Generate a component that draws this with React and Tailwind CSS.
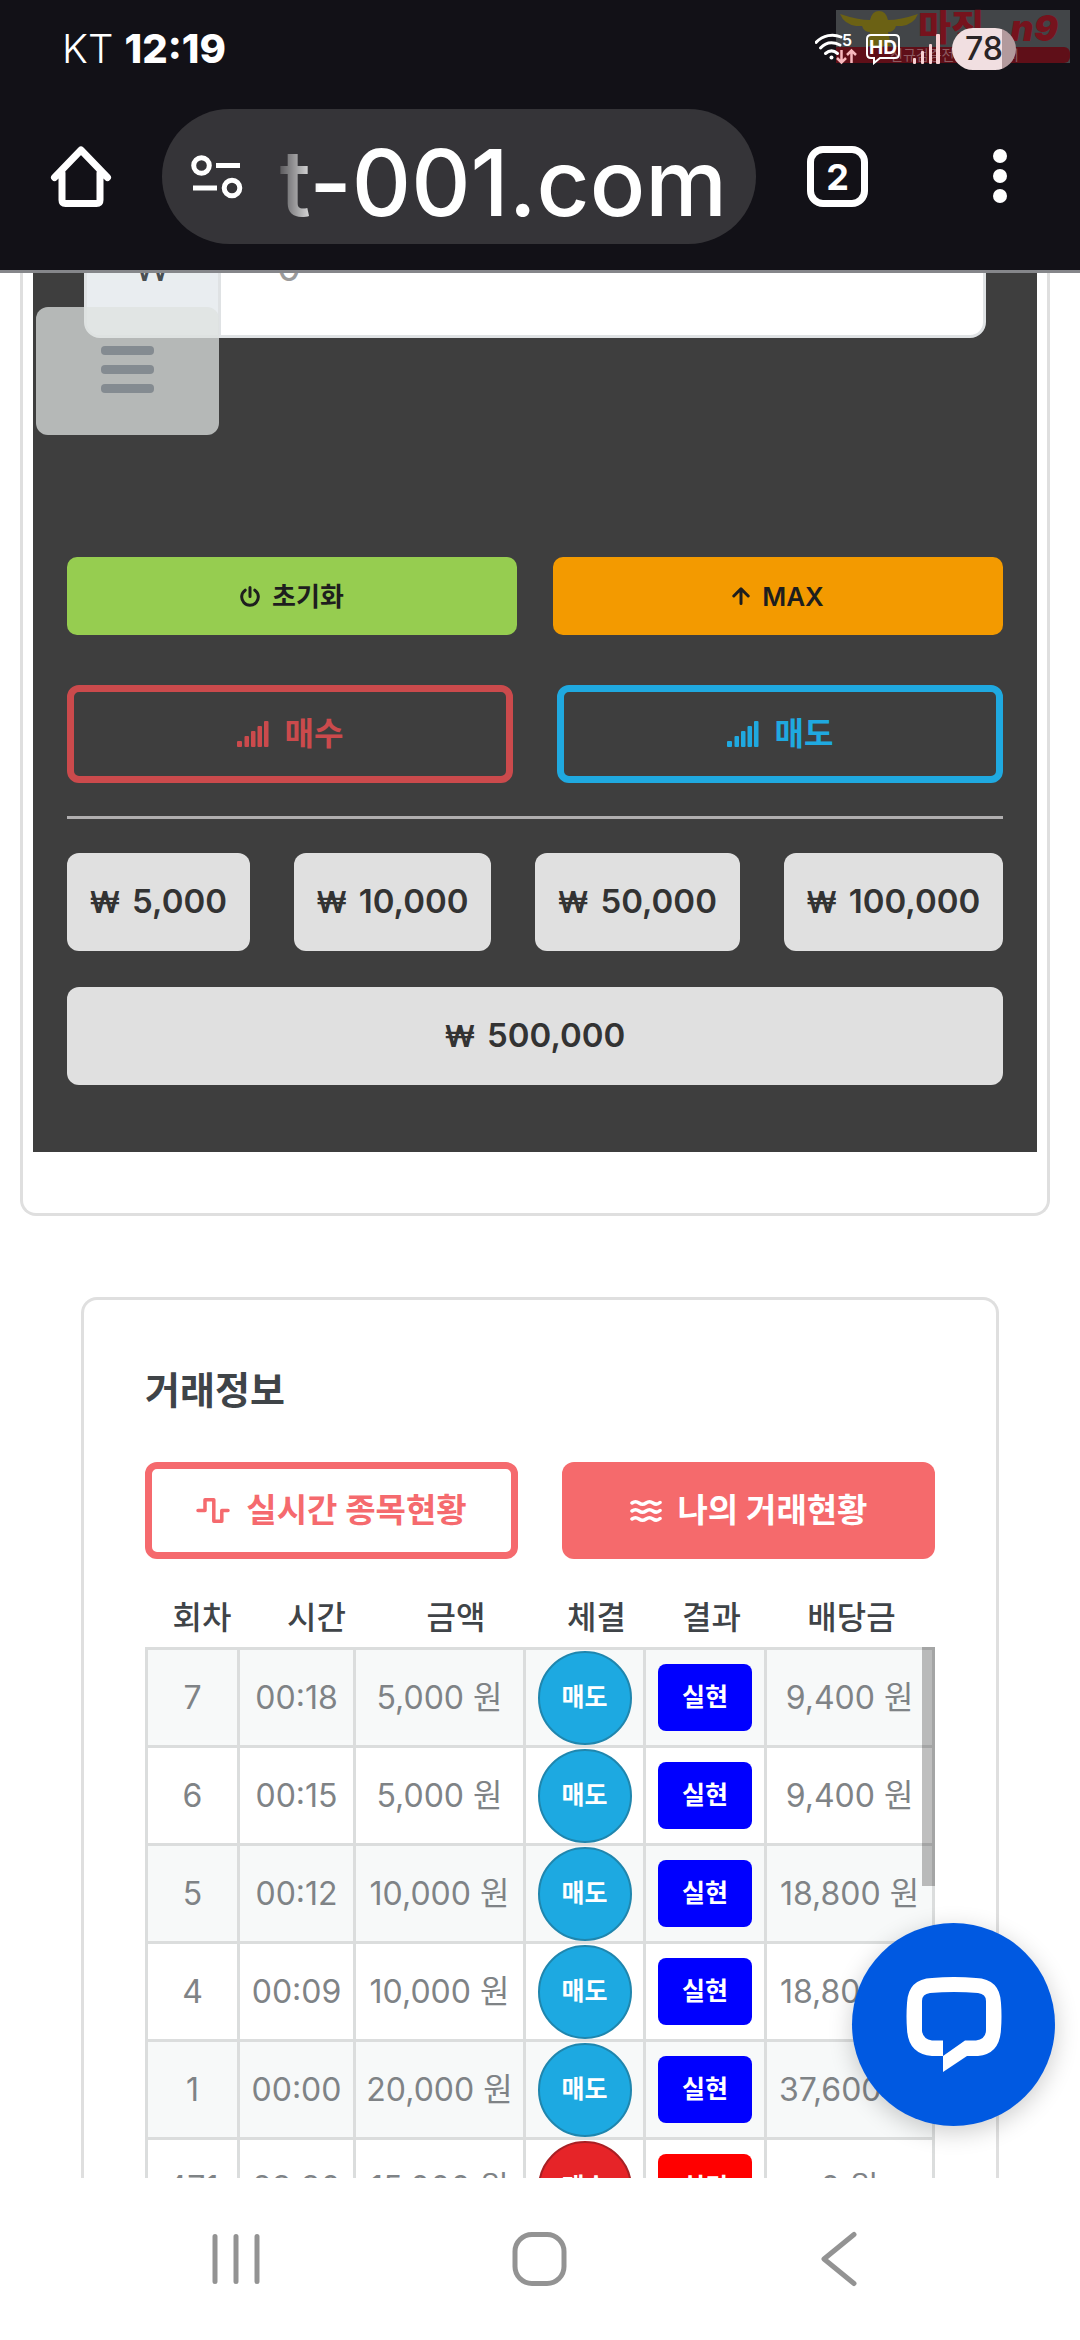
import React, { useState } from "react";

const TRADES = [
  { round: "7", time: "00:18", amount: "5,000 원", side: "매도", result: "실현", payout: "9,400 원" },
  { round: "6", time: "00:15", amount: "5,000 원", side: "매도", result: "실현", payout: "9,400 원" },
  { round: "5", time: "00:12", amount: "10,000 원", side: "매도", result: "실현", payout: "18,800 원" },
  { round: "4", time: "00:09", amount: "10,000 원", side: "매도", result: "실현", payout: "18,800 원" },
  { round: "1", time: "00:00", amount: "20,000 원", side: "매도", result: "실현", payout: "37,600 원" },
  { round: "471", time: "23:30", amount: "15,000 원", side: "매수", result: "실격", payout: "0 원" },
];

const COLUMNS = ["회차", "시간", "금액", "체결", "결과", "배당금"];
const AMOUNTS = ["5,000", "10,000", "50,000", "100,000"];

function SignalIcon() {
  return (
    <svg width="32" height="26" viewBox="0 0 32 26" fill="currentColor" aria-hidden="true">
      <rect x="0" y="20" width="5" height="6" rx="1" />
      <rect x="7.500" y="15" width="4.500" height="11" rx="1" />
      <rect x="14" y="10" width="4.500" height="16" rx="1" />
      <rect x="20.500" y="5" width="4.500" height="21" rx="1" />
      <rect x="27" y="0" width="4.500" height="26" rx="1" />
    </svg>
  );
}

function PowerIcon() {
  return (
    <svg width="20" height="21" viewBox="0 0 20 21" fill="none" stroke="currentColor" strokeWidth="3" strokeLinecap="round" aria-hidden="true">
      <path d="M10 1.5v9M5.2 4.2a8.3 8.3 0 1 0 9.6 0" />
    </svg>
  );
}

function ArrowUpIcon() {
  return (
    <svg width="18" height="18" viewBox="0 0 18 18" fill="none" stroke="currentColor" strokeWidth="3" strokeLinecap="round" strokeLinejoin="round" aria-hidden="true">
      <path d="M9 16.5V2M1.8 9 9 1.8 16.2 9" />
    </svg>
  );
}

function PulseIcon() {
  return (
    <svg width="34" height="25" viewBox="0 0 34 25" fill="none" stroke="currentColor" strokeWidth="3.500" strokeLinecap="round" strokeLinejoin="round" aria-hidden="true">
      <path d="M2 12.5H9V1.8h8.8v21.4h8V12.5h6.200" />
    </svg>
  );
}

function WaterIcon() {
  return (
    <svg width="32" height="24" viewBox="0 0 32 24" fill="none" stroke="currentColor" strokeWidth="3.500" strokeLinecap="round" strokeLinejoin="round" aria-hidden="true">
      <path d="M2 4q3.500-2.500 7 0t7 0 7 0 7-.5" />
      <path d="M2 12q3.500-2.500 7 0t7 0 7 0 7-.5" />
      <path d="M2 20q3.500-2.500 7 0t7 0 7 0 7-.5" />
    </svg>
  );
}

function StatusIcons() {
  return (
    <div className="flex items-center text-white">
      <svg width="42" height="32" viewBox="0 0 42 32" fill="none" stroke="currentColor" strokeWidth="3" aria-hidden="true">
        <path d="M1 9.500C8 2 18 .5 26 4" strokeLinecap="round" />
        <path d="M5.500 15C11 9 18 8.500 25 12" strokeLinecap="round" />
        <path d="M10.500 20.500c4-3.500 8-3.500 12 0" strokeLinecap="round" />
        <circle cx="16.500" cy="24.500" r="2" fill="currentColor" stroke="none" />
        <path d="M26.500 17v12M22 25l4.500 4.500L31 25M36.500 30V18M32 22l4.500-4.500L41 22" stroke="#f7b9bd" strokeWidth="2.500" />
        <text x="27" y="13" fontSize="16" fontWeight="600" fill="currentColor" stroke="none">5</text>
      </svg>
      <svg className="ml-2" width="36" height="32" viewBox="0 0 36 32" fill="none" stroke="currentColor" strokeWidth="2" aria-hidden="true">
        <path d="M6 2h24q4 0 4 4v15q0 4-4 4H15l-6 5v-5H6q-4 0-4-4V6q0-4 4-4z" />
        <text x="18" y="20.500" textAnchor="middle" fontSize="19" fontWeight="700" fill="currentColor" stroke="none">HD</text>
      </svg>
      <svg className="ml-3" width="27" height="30" viewBox="0 0 27 30" fill="#f9d3d5" aria-hidden="true">
        <rect x="0" y="24" width="3" height="6" rx="1" />
        <rect x="8" y="17" width="3" height="13" rx="1" />
        <rect x="16" y="10" width="3" height="20" rx="1" />
        <rect x="23" y="0" width="4" height="30" rx="1" />
      </svg>
      <span className="ml-3 flex h-[42px] w-16 items-center justify-center rounded-full bg-[linear-gradient(90deg,#f1dfe1_78%,#b39a9d_78%)] text-[32px] font-medium text-[#2a2426]">
        78
      </span>
    </div>
  );
}

function Watermark() {
  return (
    <div className="absolute top-[10px] right-[10px] w-[234px] bg-[#424548]" aria-hidden="true">
      <svg className="absolute top-0 left-0" width="84" height="38" viewBox="0 0 84 38" fill="#6b6114">
        <path d="M4 4q18 6 30 6q2-9 9-9t9 9q12 0 30-6q-4 10-16 12l-6 0q-2 6-8 6l3 14H31l3-14q-6 0-8-6l-6 0Q8 14 4 4z" />
      </svg>
      <div className="flex h-[37px] items-center justify-between pr-3 pl-[82px] text-[36px] leading-[37px] font-black text-[#76131d]">
        <span>마진</span>
        <span className="italic">n9</span>
      </div>
      <div className="h-4 rounded-r-md bg-[#5f0f18] pl-[54px] text-[14px] leading-4 text-[#8d5a60]">
        신규검증전문커뮤니티
      </div>
    </div>
  );
}

function BrowserHeader() {
  return (
    <header className="relative shrink-0 border-b-[3px] border-[#85868a] bg-[#121117] text-white">
      <Watermark />
      <div className="relative flex h-[98px] items-center justify-between pr-16 pl-[62px]">
        <p className="text-[40px]">
          <span className="font-light">KT</span> <span className="font-extrabold">12:19</span>
        </p>
        <StatusIcons />
      </div>
      <div className="flex h-[172px] items-start pr-[72px] pl-[50px]">
        <button aria-label="홈" className="mt-[46px]">
          <svg width="62" height="64" viewBox="0 0 62 64" fill="none" stroke="currentColor" strokeWidth="7" strokeLinecap="round" strokeLinejoin="round">
            <path d="M4.500 33.500 31 6l26.500 27.500M12 29v27q0 3.500 3.500 3.500h31q3.500 0 3.500-3.500V29" />
          </svg>
        </button>
        <div className="mt-[11px] ml-[50px] flex h-[135px] min-w-0 flex-1 items-center overflow-hidden rounded-full bg-[#353438] px-[29px]">
          <svg className="shrink-0" width="52" height="44" viewBox="0 0 52 44" fill="none" stroke="currentColor" strokeWidth="5" aria-hidden="true">
            <circle cx="10.500" cy="10.500" r="7.800" />
            <path d="M25 10.500h24M2 33h24" />
            <circle cx="41" cy="33" r="7.800" />
          </svg>
          <div className="ml-7 flex min-w-0 flex-1 justify-end overflow-hidden [mask-image:linear-gradient(90deg,transparent,black_48px)]">
            <span className="pt-3 text-[92px] leading-[120px] font-medium whitespace-nowrap">t-001.com</span>
          </div>
        </div>
        <button aria-label="탭" className="mt-12 ml-[51px] flex h-[61px] w-[61px] items-center justify-center rounded-2xl border-[7px] border-white text-[36px] font-bold">
          2
        </button>
        <button aria-label="메뉴 더보기" className="mt-[50px] ml-[124px]">
          <svg width="16" height="56" viewBox="0 0 16 56" fill="currentColor">
            <circle cx="8" cy="8" r="7" />
            <circle cx="8" cy="28" r="7" />
            <circle cx="8" cy="48" r="7" />
          </svg>
        </button>
      </div>
    </header>
  );
}

function OrderPanel({ amount, setAmount }) {
  return (
    <section className="mr-[30px] ml-5 rounded-b-2xl border-x-[3px] border-b-[3px] border-[#dfdfdf] px-[10px] pb-[61px]">
      <div className="bg-[#3e3e3e] px-[34px] pb-[67px]">
        <div className="mx-[17px] flex h-[65px] items-end overflow-hidden">
          <div className="flex h-[142px] flex-1 shrink-0 overflow-hidden rounded-2xl border-[3px] border-[#dfe2e4] bg-white text-[38px]">
            <label htmlFor="amount" className="flex w-[134px] items-center justify-center border-r-[3px] border-[#dfe2e4] bg-[#e9edf0] text-[#4a4f53]">
              ₩
            </label>
            <input
              id="amount"
              value={amount}
              placeholder="0"
              onChange={(e) => setAmount(e.target.value)}
              className="min-w-0 flex-1 px-14 outline-none placeholder:text-[#9b9b9b]"
            />
          </div>
        </div>

        <div className="mt-[219px] grid grid-cols-2 gap-9 text-[26px] font-semibold text-[#1e1e1e]">
          <button onClick={() => setAmount("")} className="flex h-[78px] items-center justify-center gap-3 rounded-[10px] bg-[#96cd50]">
            <PowerIcon /> 초기화
          </button>
          <button className="flex h-[78px] items-center justify-center gap-3 rounded-[10px] bg-[#f39a00]">
            <ArrowUpIcon /> MAX
          </button>
        </div>

        <div className="mt-[50px] grid grid-cols-2 gap-11 text-[32px] font-bold">
          <button className="flex h-[98px] items-center justify-center gap-4 rounded-xl border-[7px] border-[#cb4a4c] text-[#cb4a4c]">
            <SignalIcon /> 매수
          </button>
          <button className="flex h-[98px] items-center justify-center gap-4 rounded-xl border-[7px] border-[#1fa9e0] text-[#1fa9e0]">
            <SignalIcon /> 매도
          </button>
        </div>

        <hr className="mt-[33px] mb-[34px] border-t-[3px] border-[#b0aeaf]" />

        <div className="flex flex-wrap gap-x-11 gap-y-9 text-[33px] font-semibold text-[#333]">
          {AMOUNTS.map((a) => (
            <button key={a} onClick={() => setAmount(a)} className="flex h-[98px] flex-auto items-center justify-center gap-3 rounded-xl bg-[#e0e0e0]">
              <span className="text-[30px]">₩</span> {a}
            </button>
          ))}
          <button onClick={() => setAmount("500,000")} className="flex h-[98px] w-full items-center justify-center gap-3 rounded-xl bg-[#e0e0e0]">
            <span className="text-[30px]">₩</span> 500,000
          </button>
        </div>
      </div>
    </section>
  );
}

function TradeTable() {
  return (
    <div className="relative">
      <table className="block w-full text-center text-[32px]">
        <thead className="block">
          <tr className="grid h-[88px] grid-cols-[114fr_115fr_164fr_117fr_113fr_167fr] items-center pt-[30px] text-[#3f4448]">
            {COLUMNS.map((c) => (
              <th key={c} className="leading-[58px] font-medium">
                {c}
              </th>
            ))}
          </tr>
        </thead>
        <tbody className="block border-t-[3px] border-l-[3px] border-[#dbdddd] text-[#7f8386]">
          {TRADES.map((t) => (
            <tr
              key={t.round}
              className="grid h-[98px] grid-cols-[92fr_116fr_170fr_120fr_121fr_168fr] border-b-[3px] border-[#dbdddd] odd:bg-[#f7f9f9] [&>td]:flex [&>td]:items-center [&>td]:justify-center [&>td]:border-r-[3px] [&>td]:border-[#dbdddd] [&>td]:whitespace-nowrap"
            >
              <td>{t.round}</td>
              <td>{t.time}</td>
              <td>{t.amount}</td>
              <td>
                <span
                  className={`flex h-[94px] w-[94px] items-center justify-center rounded-full border-2 text-[25px] font-bold text-white ${
                    t.side === "매도" ? "border-[#1f86ae] bg-[#1da9e1]" : "border-[#a82024] bg-[#e62428]"
                  }`}
                >
                  {t.side}
                </span>
              </td>
              <td>
                <span
                  className={`flex h-[67px] w-[94px] items-center justify-center rounded-lg text-[25px] font-bold text-white ${
                    t.result === "실현" ? "bg-[#0000ff]" : "bg-[#ff0000]"
                  }`}
                >
                  {t.result}
                </span>
              </td>
              <td>{t.payout}</td>
            </tr>
          ))}
        </tbody>
      </table>
      {/* Scrollbar thumb */}
      <div className="absolute top-[88px] right-0 h-[239px] w-[13px] bg-black/25" />
    </div>
  );
}

function TradeInfo() {
  return (
    <section className="mx-[81px] mt-[81px] rounded-t-2xl border-x-[3px] border-t-[3px] border-[#dfdfdf] px-[61px] pt-[62px]">
      <h2 className="text-[38px] leading-[56px] font-bold text-[#3f4448]">거래정보</h2>
      <div className="mt-11 grid grid-cols-2 gap-11 text-[33px] font-bold">
        <button className="flex h-[97px] items-center justify-center gap-4 rounded-xl border-[7px] border-[#f56a6e] text-[#f56a6e]">
          <PulseIcon /> 실시간 종목현황
        </button>
        <button className="flex h-[97px] items-center justify-center gap-4 rounded-xl bg-[#f56a6c] text-white">
          <WaterIcon /> 나의 거래현황
        </button>
      </div>
      <TradeTable />
    </section>
  );
}

function NavBar() {
  return (
    <nav className="flex h-[162px] shrink-0 items-center justify-between bg-white px-[210px] text-[#939393]">
      <button aria-label="최근 앱">
        <svg width="52" height="54" viewBox="0 0 52 54" fill="none" stroke="currentColor" strokeWidth="5" strokeLinecap="round">
          <path d="M5 4.500v45M26 4.500v45M47 4.500v45" />
        </svg>
      </button>
      <button aria-label="홈 화면">
        <svg width="56" height="56" viewBox="0 0 56 56" fill="none" stroke="currentColor" strokeWidth="5">
          <rect x="3" y="3.500" width="49" height="49" rx="17" />
        </svg>
      </button>
      <button aria-label="뒤로">
        <svg width="52" height="56" viewBox="0 0 52 56" fill="none" stroke="currentColor" strokeWidth="5" strokeLinecap="round" strokeLinejoin="round">
          <path d="M36 3.500 6 28l30 24.500" />
        </svg>
      </button>
    </nav>
  );
}

export default function App() {
  const [amount, setAmount] = useState("");

  return (
    <div className="flex h-screen flex-col bg-white font-['Inter','Noto_Sans_CJK_KR',sans-serif]">
      <BrowserHeader />
      <main className="relative min-h-0 flex-1 overflow-hidden">
        <OrderPanel amount={amount} setAmount={setAmount} />
        <TradeInfo />

        {/* Floating menu toggle */}
        <button aria-label="메뉴" className="absolute top-[34px] left-9 flex h-32 w-[183px] flex-col items-center justify-center gap-[10px] rounded-xl bg-[#dde1e0]/75 pb-1">
          <span className="h-[9px] w-[53px] rounded-sm bg-[#848b91]" />
          <span className="h-[9px] w-[53px] rounded-sm bg-[#848b91]" />
          <span className="h-[9px] w-[53px] rounded-sm bg-[#848b91]" />
        </button>

        {/* Chat launcher */}
        <button aria-label="채팅" className="absolute right-[25px] bottom-[52px] flex h-[203px] w-[203px] items-center justify-center rounded-full bg-[#0059e1] shadow-[0_6px_24px_rgba(0,0,0,0.2)]">
          <svg width="96" height="96" viewBox="0 0 96 96" fill="white" fillRule="evenodd">
            <path d="M37 79H26Q2 77 1 52Q0 40 1 26Q2 2 26 1Q48-1 70 1Q94 2 95 26Q96 40 95 52Q94 77 72 79H61L37 95ZM37 63.500V79L59 63.500H70Q80 62 80 53V24Q80 17 72 16Q48 14 24 16Q16 17 16 24V54Q17 62 26 63.500Z" />
          </svg>
        </button>
      </main>
      <NavBar />
    </div>
  );
}
